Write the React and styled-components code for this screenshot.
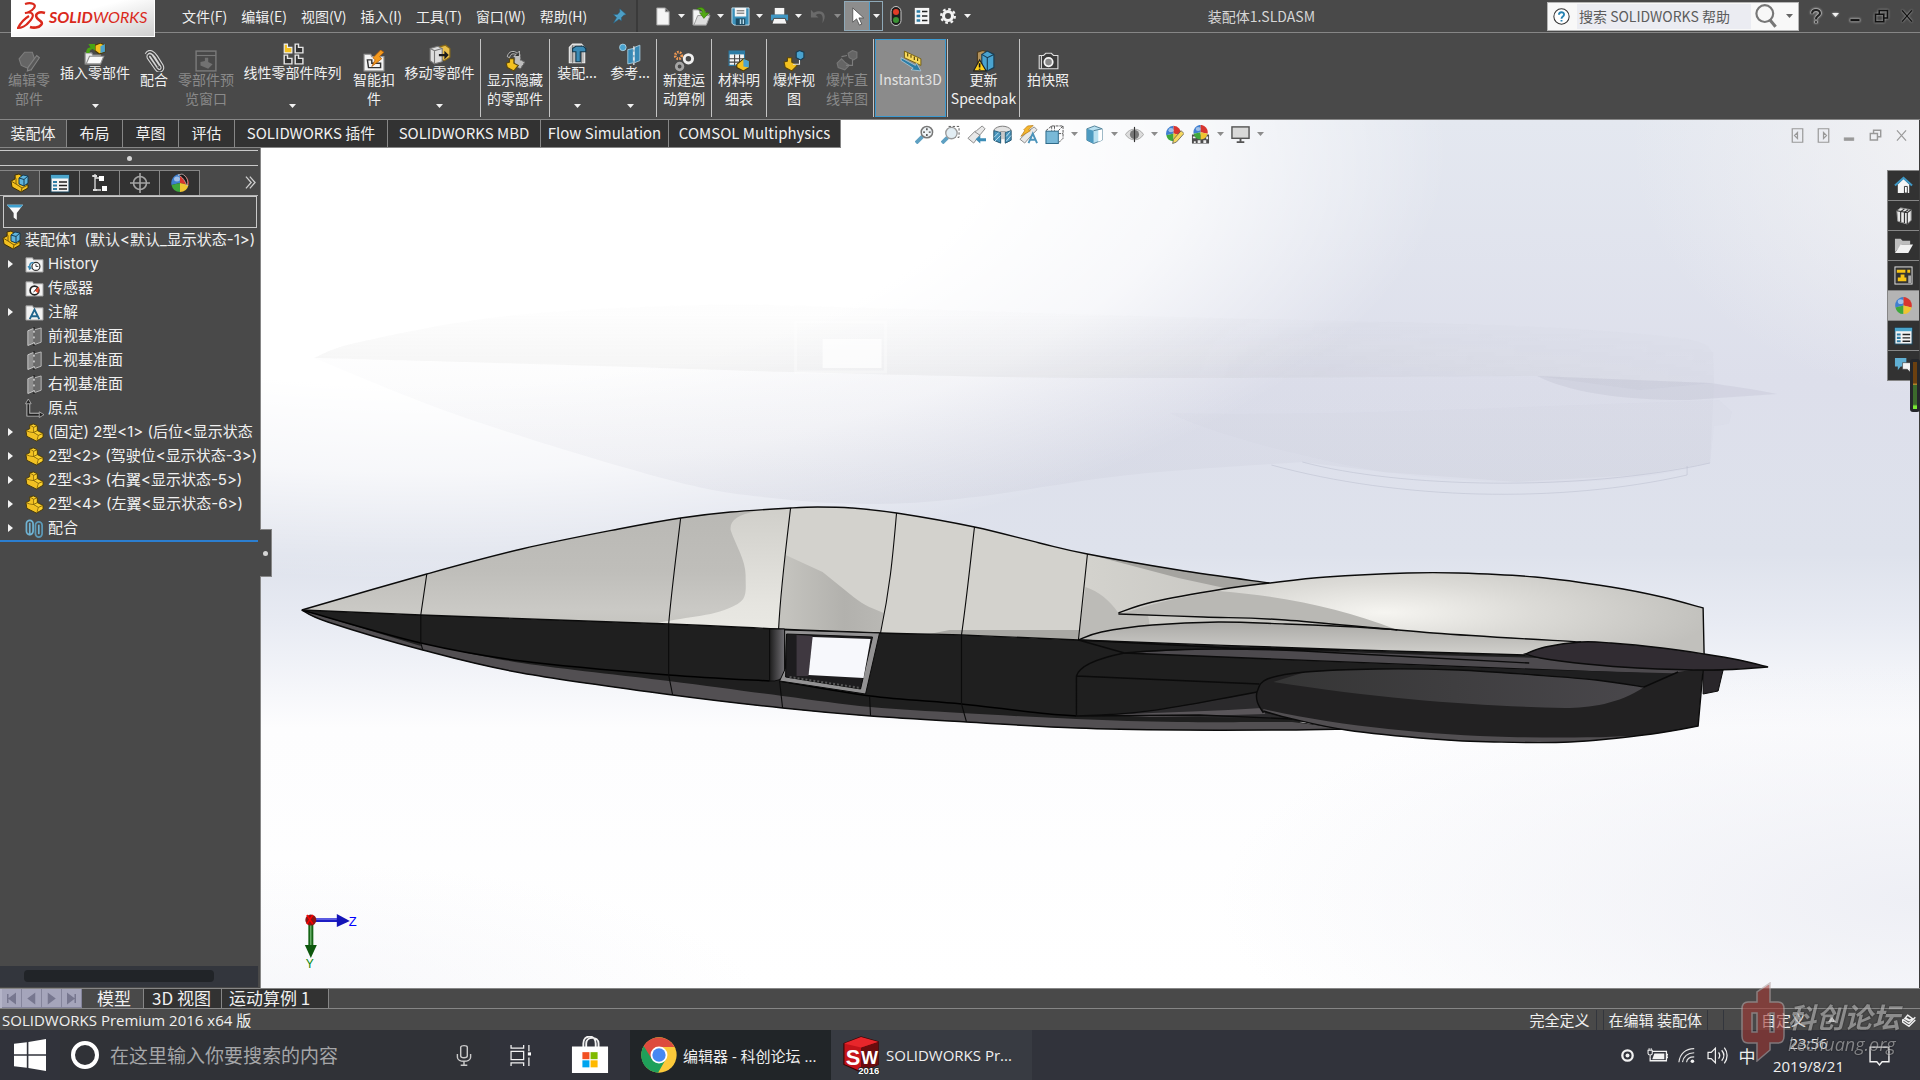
import React from 'react'
import styled, { createGlobalStyle } from 'styled-components'

const ui = '"Noto Sans CJK SC", sans-serif'
const wide = 'Inter, "Noto Sans CJK SC", sans-serif'
const line = '#868686'

/* ---------- icons, all drawn on a 20 x 20 grid ---------- */

const part = (
  <>
    <path d="M1 8 L5 6 L5 2 L9 1 L13 3 L13 8 L19 11 L19 15 L12 19 L2 14 Z" fill="#fbd02c" stroke="#4a3a08" strokeWidth="1" />
    <path d="M5 2 L9 4.500 L13 3 M9 4.500 V10 L13 8 M9 10 L14 13 L19 11 M14 13 L12.500 18.500 M1 8 L5 9.500 L9 10" fill="none" stroke="#7a5c06" strokeWidth=".9" />
    <path d="M5.500 3 L9 5 V9.500 L5.500 8.500 Z M2 9 L9 11 L13.500 14 L12 18 L2.500 13.500 Z" fill="#e5a917" opacity=".4" />
  </>
)

const assembly = (
  <>
    <path d="M1 8 L5 6 L5 2 L9 1 L12 3 L12 10 L18 12 L18 15 L11 19 L2 14 Z" fill="#f4c11f" stroke="#3d3008" />
    <path d="M1 8 L6 11 L12 15 L18 12 M12 15 L11 19 M6 11 V6 L5 3" fill="none" stroke="#7a5c06" />
    <path d="M9 5 L13 2 L18 3 V10 L14 13 L9 11 Z" fill="#5fb4dd" stroke="#173c52" />
    <path d="M9 5 L14 6.500 L18 3 M14 6.500 V13" fill="none" stroke="#173c52" />
  </>
)

const ball = (
  <>
    <path d="M10 10 L10 1 A9 9 0 0 0 1.500 12 Z" fill="#3f7fd0" />
    <path d="M10 10 L10 1 A9 9 0 0 1 18.500 12 Z" fill="#d8352f" />
    <path d="M10 10 L1.500 12 A9 9 0 0 0 10 19 Z" fill="#3fa83c" />
    <path d="M10 10 L18.500 12 A9 9 0 0 1 10 19 Z" fill="#f0c431" />
    <ellipse cx="7" cy="6" rx="3" ry="2.500" fill="#fff" opacity=".5" />
  </>
)

const plane = (
  <>
    <path d="M3 4 L9 1.500 V17 L3 19.500 Z" fill="#8c8c8c" stroke="#c9c9c9" />
    <path d="M10 3 L17 1 V16 L10 18.500 Z" fill="#6c6c6c" stroke="#bdbdbd" />
    <path d="M9.500 0 V20" stroke="#111" strokeDasharray="4 2" />
  </>
)

const folder = <path d="M1 3 H8 L9 5 H19 V18 H1 Z" fill="#f1f1f1" stroke="#9a9a9a" />

const listSheet = (
  <>
    <rect x="1" y="2" width="18" height="17" fill="#f4f4f4" stroke="#14455f" />
    <rect x="1" y="2" width="18" height="3.500" fill="#4aa5cc" />
    <path d="M9 9 H17 M9 12.500 H17 M9 16 H17" stroke="#222" strokeWidth="1.500" />
    <path d="M3 9 H7 M3 12.500 H7 M3 16 H7" stroke="#2c7ca5" strokeWidth="2.200" />
  </>
)

const icons = {
  part,
  assembly,
  plane,
  list: listSheet,
  ball,
  appearance: (
    <>
      {ball}
      <path d="M8 2 C13 4 15 8 17 13 C19 9 17 3 12 1 Z" fill="#161616" stroke="#ddd" strokeWidth=".6" />
    </>
  ),
  pin: <path d="M11 1 L19 8 L16 9 L13 12 L13 16 L10 14 L3 19 L7 12 L3 8 L8 8 L11 5 Z" fill="#4d9fc6" stroke="#27607d" strokeWidth=".7" />,
  newDoc: <path d="M4 1 H13 L17 5 V19 H4 Z M13 1 V5 H17" fill="#f5f5f5" stroke="#9c9c9c" />,
  open: (
    <>
      <path d="M1 3 H7 L8 5 H14 V9 L18 7 L15 19 H1 Z" fill="#f5f5f5" stroke="#999" />
      <path d="M2 19 L6 9 H19 L15 19 Z" fill="#dedede" stroke="#999" />
      <path d="M5 2 C9 -1 14 1 14 6 H18 L12.500 12 L8 6 H11 C11 3 8 2 5 2 Z" fill="#52a914" stroke="#2f6a08" strokeWidth=".6" />
    </>
  ),
  save: (
    <>
      <path d="M1 1 H19 V19 H3 L1 17 Z" fill="#3b90ba" stroke="#c7dfeb" />
      <rect x="4" y="1" width="12" height="9" fill="#f6f6f6" />
      <path d="M6 4 H14 M6 6.500 H14" stroke="#555" />
      <path d="M5 12 H15 V19 H5 Z" fill="#1d4a61" />
      <path d="M10 13 V18 M13 13 V18" stroke="#b9dcec" strokeWidth="1.500" />
    </>
  ),
  print: (
    <>
      <path d="M5 1 H15 V8 H5 Z" fill="#f5f5f5" />
      <path d="M1 8 H19 V14 H1 Z" fill="#3f97c4" />
      <path d="M4 12 H16 L18 18 H2 Z" fill="#f5f5f5" stroke="#444" />
    </>
  ),
  undo: <path d="M2 3 V11 H10 L7 8.500 C12 5 16 8 14 17 C20 9 15 1 5 6 Z" fill="#6a6a6a" />,
  cursor: <path d="M5 1 V16 L9 12.500 L12 19 L14.500 18 L11.500 11.500 H16.500 Z" fill="#fff" stroke="#444" strokeWidth=".8" />,
  traffic: (
    <>
      <rect x="5" y="0.500" width="10" height="19" rx="5" fill="#1d1d1d" stroke="#c9c9c9" />
      <circle cx="10" cy="6" r="3" fill="#e33b26" />
      <circle cx="10" cy="14" r="3" fill="#3a9134" />
    </>
  ),
  props: (
    <>
      <rect x="2" y="1" width="16" height="18" fill="#f5f5f5" />
      <path d="M10 5 H16 M10 10 H16 M10 15 H16" stroke="#222" strokeWidth="1.500" />
      <path d="M4 5 H8 M4 10 H8 M4 15 H8" stroke="#2c7ca5" strokeWidth="3" />
    </>
  ),
  gear: (
    <>
      <circle cx="10" cy="10" r="5" fill="none" stroke="#f3f3f3" strokeWidth="3.400" />
      <circle cx="10" cy="10" r="7.600" fill="none" stroke="#f3f3f3" strokeWidth="2.500" strokeDasharray="3 2.970" />
    </>
  ),
  editPart: (
    <g opacity=".35">
      <path d="M1 8 L6 2 L13 2 L15 8 L12 18 L3 14 Z" fill="#9a9a9a" stroke="#ddd" />
      <path d="M9 16 L17 5 L19.500 7 L12 18 L8.500 19 Z" fill="#777" stroke="#eee" />
    </g>
  ),
  insert: (
    <>
      <path d="M10 2 L15 0 L19 2 V8 L14 10 L10 7 Z" fill="#f4c11f" stroke="#4a3a08" />
      <path d="M15 3 L19 1 V8 L15 9 Z" fill="#4aa3cf" />
      <path d="M1 9 H7 L8 11 H15 V19 H1 Z" fill="#e9e9e9" stroke="#8d8d8d" />
      <path d="M2 19 L5 12 H18 L15 19 Z" fill="#fafafa" stroke="#8d8d8d" />
      <path d="M2 9 C2 5 4 4 6 4 L4 1 H10 V7 L8 5.500 C6 6 5 7 5 9 Z" fill="#49a313" />
    </>
  ),
  clip: (
    <>
      <path d="M3 4 C6 -1 10 3 12 6 L17 14 C19 18 15 21 12 17 L5 7 C4 4 7 4 8 6 L14 15" fill="none" stroke="#d5d5d5" strokeWidth="3.400" />
      <path d="M3 4 C6 -1 10 3 12 6 L17 14 C19 18 15 21 12 17 L5 7 C4 4 7 4 8 6 L14 15" fill="none" stroke="#444" strokeWidth="1.400" />
    </>
  ),
  preview: (
    <g opacity=".5">
      <rect x="1" y="1" width="18" height="18" fill="none" stroke="#aaa" strokeWidth="1.300" />
      <path d="M1 5 H19" stroke="#aaa" />
      <path d="M5 11 L9 10 V7 L12 7 V11 L16 13 L12 17 L5 14 Z" fill="#999" />
    </g>
  ),
  pattern: (
    <>
      <path d="M2 1 H5 V4 H9 V9 H2 Z" fill="#f4c11f" stroke="#eee" />
      <path d="M12 1 H15 V4 H19 V9 H12 Z M2 11 H5 V14 H9 V19 H2 Z M12 11 H15 V14 H19 V19 H12 Z" fill="#333" stroke="#e5e5e5" strokeWidth="1.300" />
    </>
  ),
  smart: (
    <>
      <path d="M1 4 H7 L8 6 H19 V19 H1 Z" fill="#f4f4f4" stroke="#999" />
      <path d="M4 9 H8 V12 H16 V16 H5 Z" fill="none" stroke="#333" strokeWidth="1.300" />
      <path d="M16 0 L19 2 L15 6 L17 8 L8 15 L11 9 L9 7 Z" fill="#f39a1e" stroke="#b45b07" strokeWidth=".7" />
    </>
  ),
  move: (
    <>
      <path d="M8 4 L15 2 L19 5 V13 L14 16 L8 14 Z" fill="#eac04b" stroke="#8a6a17" />
      <path d="M1 5 L8 3 L12 5 V17 L5 19 L1 16 Z" fill="#dedede" stroke="#777" />
      <path d="M1 5 L5 7 L12 5 M5 7 V19" fill="none" stroke="#777" />
      <path d="M9 10 H14 V7 L18 11 L14 15 V12 H9 Z" fill="#1c1c1c" />
    </>
  ),
  hideShow: (
    <>
      <path d="M10 5 L15 4 L15 9 L19 11 L15 17 L9 14 Z" fill="#bdbdbd" stroke="#666" strokeDasharray="2 1" />
      <path d="M2 12 L5 11 V8 L9 8 V12 L13 14 L9 19 L3 16 Z" fill="#f4c11f" stroke="#5b470a" />
      <path d="M3 6 C4 1 9 0 12 3 L14 1 V6 H9 L11 4 C8 3 6 3 5 7 Z" fill="#333" stroke="#ddd" strokeWidth=".7" />
    </>
  ),
  feature: (
    <>
      <path d="M3 4 L6 1 H14 L17 4 V18 H3 Z" fill="#bcbcbc" stroke="#eee" />
      <path d="M6 2 V18 M14 2 V18" stroke="#777" />
      <path d="M6 5 L9 3 H16 L18 5 V8 H13 V17 L9 17 V8 L6 8 Z" fill="#3a8ab5" stroke="#12384d" />
    </>
  ),
  reference: (
    <>
      <circle cx="3.500" cy="4" r="3" fill="#4aa3cf" stroke="#b8d9ea" strokeWidth=".7" />
      <path d="M8 6 L13 5 V18 L8 19 Z M14 4 L19 2 V16 L14 18 Z" fill="#3789b5" stroke="#a8cfe2" strokeWidth=".8" />
      <path d="M13.500 3 V20" stroke="#fff" strokeDasharray="3 2" />
    </>
  ),
  motion: (
    <>
      <circle cx="5" cy="5" r="3" fill="none" stroke="#ef9a54" strokeWidth="2.500" strokeDasharray="1.500 1" />
      <circle cx="14" cy="8" r="3.800" fill="none" stroke="#f0f0f0" strokeWidth="2.600" />
      <circle cx="6" cy="15" r="3" fill="none" stroke="#a5a5a5" strokeWidth="2.500" />
    </>
  ),
  bom: (
    <>
      <path d="M1 1 H15 V14 H1 Z" fill="#f5f5f5" stroke="#2c7ca5" />
      <path d="M1 1 H15 V4 H1 Z" fill="#2c7ca5" />
      <path d="M1 8 H15 M1 11 H15 M6 4 V14 M10.500 4 V14" stroke="#444" />
      <path d="M8 13 L14 8 L19 10 V16 L14 19 L8 16 Z" fill="#f4c11f" stroke="#4a3a08" />
      <path d="M14 8 L19 10 V16 L14 15 Z" fill="#4aa3cf" />
    </>
  ),
  explode: (
    <>
      <path d="M1 11 L4 10 V7 L8 7 V11 L13 14 L8 19 L2 16 Z" fill="#f4c11f" stroke="#5b470a" />
      <path d="M12 2 L15 0.500 L19 2 V7 L16 9 L12 7 Z" fill="#4aa3cf" stroke="#173c52" />
      <path d="M9 13 H15 V9" fill="none" stroke="#e8e8e8" />
    </>
  ),
  explodeOff: (
    <g opacity=".35">
      <path d="M1 12 L5 8 L8 11 L12 14 L8 18 L2 16 Z M11 3 L15 0.500 L19 2 V7 L16 9 L12 7 Z" fill="#999" stroke="#ccc" />
      <path d="M5 6 L10 5 M9 14 H15 V9" fill="none" stroke="#ddd" />
    </g>
  ),
  instant: (
    <>
      <path d="M4 1 L19 8 V14 L4 7 Z" fill="#f8d95c" stroke="#6c560c" strokeWidth=".8" />
      <path d="M7 3 V6 M10 4.500 V7 M13 6 V9 M16 7.500 V10" stroke="#513f04" />
      <path d="M1 7 L14 14 L15 12 L19 19 L10 18 L12 16.500 L1 9.500 Z" fill="#2c7ca5" stroke="#bcd9e8" strokeWidth=".6" />
    </>
  ),
  speedpak: (
    <>
      <path d="M4 2 L9 0.500 L14 2 V18 L4 18 Z" fill="#b3925b" stroke="#4d3b1c" />
      <path d="M8 4 L13 1 L19 4 V16 L13 19 L8 16 Z" fill="#4aa3cf" stroke="#173c52" />
      <path d="M8 4 L13 7 L19 4 M13 7 V19" stroke="#173c52" fill="none" />
      <path d="M6 9 L12 19 H0.500 Z" fill="#ffd21a" stroke="#222" />
      <path d="M6 12 V16 M6 17 V18" stroke="#111" strokeWidth="1.500" />
    </>
  ),
  camera: (
    <>
      <path d="M2 5 H6 L8 3 H13 L15 5 H19 V17 H2 Z" fill="#3a3a3a" stroke="#ddd" />
      <circle cx="10.500" cy="11" r="3.800" fill="#888" stroke="#f4f4f4" strokeWidth="1.600" />
      <path d="M4 5 V17" stroke="#ddd" />
    </>
  ),
  zoomFit: (
    <>
      <path d="M1 19 L8 12" stroke="#5ea0c2" strokeWidth="4" />
      <circle cx="12.500" cy="7.500" r="6" fill="#eef3f6" stroke="#777" strokeWidth="1.600" />
      <path d="M12.500 3.500 V5.500 M12.500 9.500 V11.500 M8.500 7.500 H10.500 M14.500 7.500 H16.500" stroke="#444" strokeWidth="1.500" />
    </>
  ),
  zoomArea: (
    <>
      <path d="M8 1.500 H19 V13 H14" fill="none" stroke="#555" strokeDasharray="2.500 1.800" />
      <path d="M1 19 L7 13" stroke="#5ea0c2" strokeWidth="4" />
      <circle cx="11" cy="8.500" r="6" fill="#e2edf3" stroke="#999" strokeWidth="1.400" />
    </>
  ),
  previous: (
    <>
      <path d="M1 14 L8 7 L10 6 L16 1 L19 4 L14 10 L7 19 Z" fill="#e8e8e8" stroke="#888" />
      <path d="M8 7 L14 11" stroke="#888" />
      <path d="M9 15 L14 11 V14 H20 V17 H14 V19.500 Z" fill="#3c8db7" />
    </>
  ),
  section: (
    <>
      <path d="M1 5 C5 0 15 0 19 5 V16 L13 19 V7 H8 V19 L1 16 Z" fill="#e2e2e2" stroke="#777" />
      <path d="M8 7 H13 V15 H8 Z" fill="#c9c9c9" />
      <path d="M1 6 L8 8 V19 L1 16 Z M19 6 L13 8 V19 L19 16 Z" fill="#4a96bd" stroke="#28607e" />
      <path d="M1 13 L6 8 M2 17 L8 11 M14 12 L18 7 M14 17 L19 11" stroke="#bfe0f0" />
    </>
  ),
  dynamic: (
    <>
      <path d="M1 15 L9 7 L16 2 L19 5 L13 11 L6 19 Z" fill="#e8e8e8" stroke="#888" />
      <path d="M9 1 L15 0.500 L10 5 L12 6 L2 12 L6 6 L5 5 Z" fill="#f5b62e" stroke="#b37714" strokeWidth=".7" />
      <path d="M10 19 L14.500 9 L19 19 M12 15.500 H17" fill="none" stroke="#4a93ba" strokeWidth="2" />
    </>
  ),
  orient: (
    <>
      <path d="M1 6 L7 1 H19 V14 L14 19 M14 6 L19 1 M7 1 V6 M10 1 V6 M14 9 H19" fill="none" stroke="#555" strokeDasharray="3 1" />
      <rect x="1" y="6.500" width="13" height="13" fill="#79b9d8" stroke="#2a6686" />
    </>
  ),
  display: (
    <>
      <path d="M2 4 L10 1 L18 4 V16 L9 19.500 L2 16 Z" fill="#b8e0f0" stroke="#4d7e96" />
      <path d="M2 4 L9 6 V19.500 L2 16 Z" fill="#4d9ac0" />
      <path d="M14 5 L18 4 V16 L14 17.500 Z" fill="#fff" />
      <path d="M9 6 L18 4" stroke="#4d7e96" />
    </>
  ),
  eye: (
    <>
      <path d="M0.500 10 C5 2.500 15 2.500 19.500 10 C15 17.500 5 17.500 0.500 10 Z" fill="#dcdcdc" stroke="#a8a8a8" />
      <circle cx="10" cy="10" r="4.800" fill="#777" />
      <path d="M10 2 V18" stroke="#333" strokeWidth="1.200" />
    </>
  ),
  ballEdit: (
    <>
      <g transform="scale(.9)">{ball}</g>
      <path d="M17 6 L20 9 L12 18 L8 19.500 L9 15 Z" fill="#f6d860" stroke="#555" strokeWidth=".8" />
    </>
  ),
  scene: (
    <>
      <path d="M1 10 H19 V19.500 H1 Z" fill="#4d4d4d" />
      <path d="M2 12 H5 V14 H2 Z M7 16 H10 V19 H7 Z M13 16 H16 V19 H13 Z M16 12 H18 V15 H16 Z M3 17 H5 V19 H3 Z" fill="#eee" />
      <g transform="translate(1.500 -1) scale(.86)">{ball}</g>
    </>
  ),
  monitor: (
    <>
      <rect x="1" y="2" width="18" height="12" fill="#d9d9d9" stroke="#555" strokeWidth="1.500" />
      <path d="M10 14 V18 M6 18 H14" stroke="#555" strokeWidth="2" />
    </>
  ),
  structure: (
    <>
      <path d="M2 3 H5 M5 1 V17 H11 M5 5 H10" fill="none" stroke="#e0e0e0" strokeWidth="1.300" />
      <path d="M9 3 H14 V8 H9 Z M12 13 H17 V18 H12 Z" fill="#fff" />
      <path d="M3 3 H7 M3 17 H7" stroke="#ddd" strokeWidth="2" />
    </>
  ),
  target: (
    <>
      <circle cx="10" cy="10" r="6.500" fill="none" stroke="#a5a5a5" strokeWidth="1.600" />
      <path d="M10 0 V20 M0 10 H20" stroke="#a5a5a5" strokeWidth="1.600" />
    </>
  ),
  funnel: (
    <>
      <path d="M1 2 H19 L12 11 V19 L8.500 16 V11 Z" fill="#fafafa" />
      <path d="M1 2 H19 L16.500 5 H3.500 Z" fill="#3fa0cf" />
    </>
  ),
  history: (
    <>
      {folder}
      <circle cx="11.500" cy="12" r="4.200" fill="#fff" stroke="#333" strokeWidth="1.300" />
      <path d="M11.500 9.500 V12 H14" fill="none" stroke="#333" />
      <path d="M9 8 C5 8 4 11 6 14 L4 15 M6 14 L3 12" fill="none" stroke="#3789b5" strokeWidth="1.600" />
    </>
  ),
  sensor: (
    <>
      {folder}
      <circle cx="10" cy="12" r="4.600" fill="#fff" stroke="#222" strokeWidth="1.800" />
      <path d="M10 12 L15 8 L14 15 Z" fill="#e8482b" />
      <path d="M9 14 L13 9" stroke="#333" />
    </>
  ),
  note: (
    <>
      {folder}
      <path d="M5 17 L10 7 L15 17 M7 14 H13" fill="none" stroke="#1f648c" strokeWidth="2" />
    </>
  ),
  origin: (
    <>
      <path d="M3.500 3 V16.500 H17" fill="none" stroke="#bdbdbd" strokeWidth="4" />
      <path d="M3.500 2 V16.500 H18" fill="none" stroke="#222" strokeWidth="2" />
      <path d="M0.500 5 L3.500 0 L6.500 5 Z M15 13.500 L20 16.500 L15 19.500 Z" fill="#222" stroke="#bbb" strokeWidth=".8" />
    </>
  ),
  mates: (
    <>
      <rect x="1.500" y="1.500" width="7" height="15" rx="3.500" fill="none" stroke="#6fb3d3" strokeWidth="1.800" />
      <path d="M5 4 V17" stroke="#6fb3d3" strokeWidth="1.800" />
      <rect x="11" y="3" width="7" height="16" rx="3.500" fill="none" stroke="#5c9ab8" strokeWidth="1.800" />
      <path d="M14.500 6 V16" stroke="#6fb3d3" strokeWidth="1.800" />
    </>
  ),
  home: (
    <>
      <path d="M4 9 V18 H16 V9 L10 3 Z" fill="#f5f5f5" />
      <path d="M1 10 L10 2 L19 10" fill="none" stroke="#3f97c4" strokeWidth="2.200" />
      <path d="M11 11 H14 V18 H11 Z" fill="#fff" stroke="#333" />
    </>
  ),
  books: (
    <>
      <path d="M3 5 L7 2 L18 4 V15 L14 19 L4 16 Z" fill="#e8e8e8" stroke="#999" />
      <path d="M3 5 L14 7 L18 4 M7 6 V17 M11 6.500 V18 M14 7 V19 M7 6 L11 3 M11 6.500 L15 4" fill="none" stroke="#333" strokeWidth="1.200" />
    </>
  ),
  folderOpen: (
    <>
      <path d="M1 3 H7 L9 5 H17 V9 H8 L1 17 Z" fill="#bdbdbd" />
      <path d="M7 9 H20 L15 18 H1 Z" fill="#f1f1f1" />
    </>
  ),
  palette: (
    <>
      <rect x="1" y="1" width="18" height="18" fill="#333" stroke="#e8e8e8" />
      <path d="M3 4 H12 V7 H3 Z M14 4 H17 V7 H14 Z M7 9 H11 V12 H13 V16 H4 V12 H7 Z" fill="#f6c415" />
      <rect x="15" y="10" width="3" height="8" fill="#aaa" />
    </>
  ),
  chat: (
    <>
      <path d="M1 2 H13 V11 H7 L4 15 V11 H1 Z" fill="#60afd3" />
      <path d="M9 7 H19 V14 H17 V17 L14 14 H9 Z" fill="#f3f3f3" stroke="#444" strokeWidth=".7" />
    </>
  ),
  paneLeft: <path d="M3 1 H17 V19 H3 Z M10 6 V14 L6 10 Z" fill="none" stroke="#999" strokeWidth="1.600" />,
  paneRight: <path d="M3 1 H17 V19 H3 Z M10 6 V14 L14 10 Z" fill="none" stroke="#999" strokeWidth="1.600" />,
  minimize: <rect x="3" y="14" width="14" height="4" fill="currentColor" stroke="#999" strokeWidth=".8" />,
  restore: <path d="M7 7 V2 H18 V12 H13 M2 7 H13 V17 H2 Z" fill="none" stroke="currentColor" strokeWidth="2.200" />,
  close: <path d="M3 2 L17 18 M17 2 L3 18" fill="none" stroke="currentColor" strokeWidth="1.800" />,
  magnifier: (
    <>
      <circle cx="9" cy="8" r="7" fill="none" stroke="#777" strokeWidth="1.800" />
      <path d="M13 13 L18 19" stroke="#777" strokeWidth="2.600" />
    </>
  ),
  help: (
    <>
      <circle cx="10" cy="10" r="9" fill="#fff" stroke="#333" strokeWidth="1.200" />
      <path d="M7 8 C7 4 13 4 13 7.500 C13 10 10 10 10 12.500 M10 14 V16" fill="none" stroke="#2783b3" strokeWidth="2.200" />
    </>
  ),
  question: (
    <>
      <path d="M5 7 C5 1 15 1 15 6.500 C15 10 10 9 10 14 M10 16 V19" fill="none" stroke="#aaa" strokeWidth="4.400" />
      <path d="M5 7 C5 1 15 1 15 6.500 C15 10 10 9 10 14 M10 16.500 V18.500" fill="none" stroke="#222" strokeWidth="2.600" />
    </>
  ),
  chevrons: <path d="M3 1 L11 10 L3 19 M9 1 L17 10 L9 19" fill="none" stroke="#cfcfcf" strokeWidth="2" />,
  tag: <path d="M1 9 L10 15 L19 6 M1 9 V13 L10 19 L19 10 M5 7 L12 11 M8 3 L15 8 L10 11 L4 8 Z" fill="none" stroke="#f1f1f1" strokeWidth="2" />,
  windows: <path d="M0 3 L8 2 V9.500 H0 Z M9 1.800 L20 0 V9.500 H9 Z M0 10.500 H8 V18 L0 17 Z M9 10.500 H20 V20 L9 18.200 Z" fill="#fff" />,
  mic: <path d="M7 3 C7 1 13 1 13 3 V11 C13 13 7 13 7 11 Z M4 9 V12 C4 17 16 17 16 12 V9 M10 16 V19 M7 19.300 H13" fill="none" stroke="#c9c9c9" strokeWidth="1.300" />,
  taskView: (
    <>
      <path d="M1 0 V3 H13 V0 M1 6 H13 V14 H1 Z M1 20 V17 H13 V20 M18 0 V6 M18 12 V20" fill="none" stroke="#f2f2f2" strokeWidth="1.200" />
      <rect x="17" y="7" width="3" height="3" fill="#fff" />
    </>
  ),
  store: (
    <>
      <path d="M6.500 6 V4 C6.500 -1 13 -1 13 4 V6 M8 6 V4 C8 0 14.500 0 14.500 4 V6" fill="none" stroke="#f2f2f2" />
      <path d="M0.500 5.500 H19.500 V19.500 H0.500 Z" fill="#fff" />
      <path d="M6 8.500 H9.700 V12.200 H6 Z" fill="#f25022" />
      <path d="M10.300 8.500 H14 V12.200 H10.300 Z" fill="#7fba00" />
      <path d="M6 12.800 H9.700 V16.500 H6 Z" fill="#00a4ef" />
      <path d="M10.300 12.800 H14 V16.500 H10.300 Z" fill="#ffb900" />
    </>
  ),
  chrome: (
    <>
      <circle cx="10" cy="10" r="9.800" fill="#fbc93a" />
      <path d="M10 10 L1.500 5 A9.800 9.800 0 0 0 9.500 19.800 L14 12 Z" fill="#1fa05a" />
      <path d="M1.500 5 A9.800 9.800 0 0 1 18.600 5.600 H10 L6 12.200 Z" fill="#dd4b3e" />
      <circle cx="10" cy="10" r="4.700" fill="#fff" />
      <circle cx="10" cy="10" r="3.700" fill="#4688f1" />
    </>
  ),
  solidworks: (
    <>
      <path d="M1 4 L10 0.500 L19 3 V15 L10 19 L1 15 Z" fill="#c4141a" stroke="#3c0506" strokeWidth=".6" />
      <path d="M10 6 L19 3 V15 L10 19 Z" fill="#6b0c0e" />
      <path d="M1 4 L10 0.500 L19 3 L10 6 Z" fill="#e8262b" />
      <text x="2" y="15" fontSize="11.500" fontWeight="700" fill="#fff" fontFamily="Liberation Sans">S</text>
      <text x="10" y="14.500" fontSize="9.500" fontWeight="700" fill="#fff" fontFamily="Liberation Sans">W</text>
      <text x="8.500" y="20" fontSize="5" fontWeight="700" fill="#fff" stroke="#222" strokeWidth="1" paintOrder="stroke" fontFamily="Liberation Sans">2016</text>
    </>
  ),
  record: (
    <>
      <circle cx="10" cy="10" r="8" fill="none" stroke="#f2f2f2" strokeWidth="3.500" />
      <circle cx="10" cy="10" r="3" fill="#f2f2f2" />
    </>
  ),
  battery: (
    <>
      <path d="M5 6 H18.500 V15 H3 V12 M18.500 9 H20 V12 H18.500" fill="none" stroke="#f2f2f2" strokeWidth="1.200" />
      <path d="M7 8 H16.500 V13.500 H5 Z" fill="#f2f2f2" />
      <path d="M1 5 H5 V8 C5 10 1 10 1 8 Z M2 3 V5 M4 3 V5 M3 9 V12" stroke="#f2f2f2" fill="none" />
    </>
  ),
  wifi: (
    <>
      <path d="M1 18 C2 9 8 3 18 3 M5 18 C6 12 10 8 18 7.500 M9.500 18 C10 14 13 12 18 12" fill="none" stroke="#e4e4e4" strokeWidth="1.300" />
      <circle cx="16" cy="17" r="2" fill="#f2f2f2" />
    </>
  ),
  sound: <path d="M1 7 H4 L8 3 V17 L4 13 H1 Z M11 7 C12.500 9 12.500 11 11 13 M14 5 C16.500 8 16.500 12 14 15 M16.500 2.500 C20 7 20 13 16.500 17.500" fill="none" stroke="#f0f0f0" strokeWidth="1.200" />,
  notice: <path d="M1 2 H19 V16 H12.500 L10 19 L7.500 16 H1 Z" fill="none" stroke="#f4f4f4" strokeWidth="1.300" />,
}

function Icon({ name, size = 20 }) {
  return <svg width={size} height={size} viewBox="0 0 20 20" aria-hidden="true">{icons[name]}</svg>
}

function Caret({ color = '#f2f2f2' }) {
  return <svg width="7" height="4" viewBox="0 0 7 4" aria-hidden="true"><path d="M0 0 H7 L3.500 4 Z" fill={color} /></svg>
}

/* ---------- model drawing ---------- */

// smooth line through the points; join = 'L' continues a path, 'M' starts one
function curve(points, join = 'M') {
  let d = `${join}${points[0][0]} ${points[0][1]}`
  for (let i = 0; i < points.length - 1; i++) {
    const p0 = points[i - 1] || points[i]
    const p1 = points[i]
    const p2 = points[i + 1]
    const p3 = points[i + 2] || p2
    d += ` C${p1[0] + (p2[0] - p0[0]) / 6} ${p1[1] + (p2[1] - p0[1]) / 6} ${p2[0] - (p3[0] - p1[0]) / 6} ${p2[1] - (p3[1] - p1[1]) / 6} ${p2[0]} ${p2[1]}`
  }
  return d + ' '
}

const back = (points) => [...points].reverse()

const topLine = [[302, 610], [427, 574], [522, 549], [619, 529], [681, 518], [731, 512], [791, 508], [818, 507], [852, 508], [897, 513], [975, 527], [1040, 543], [1088, 554], [1179, 570], [1270, 583]]
const waterLine = [[302, 610], [421, 615], [669, 624], [778, 629], [881, 633], [962, 635], [1079, 640], [1357, 650], [1526, 655]]
const keel = [[302, 610], [328, 622], [423, 650], [522, 673], [673, 695], [783, 708], [871, 716], [967, 722], [1077, 728], [1179, 730], [1286, 730], [1347, 729]]
const sideLine = [[302, 610], [421, 643], [522, 661], [669, 675], [770, 681]]
const sideLine2 = [[780, 681], [871, 696], [962, 704], [1040, 713], [1077, 716]]
const stripTop = [[421, 643], [522, 663], [669, 681], [783, 696], [871, 707], [962, 713], [1077, 719], [1179, 722], [1293, 722]]
const podTop = [[1119, 613], [1153, 602], [1224, 589], [1270, 583], [1327, 577], [1408, 573], [1459, 573], [1536, 577], [1612, 587], [1663, 597], [1704, 608]]
const podLow = [[1119, 614], [1204, 617], [1286, 620], [1434, 633], [1582, 642]]
const wingTop = [[1079, 640], [1102, 632], [1153, 625], [1219, 622], [1286, 624], [1357, 627], [1398, 630]]
const fin = [[1526, 654], [1546, 647], [1582, 642], [1612, 643], [1663, 648], [1705, 654], [1740, 660], [1769, 667]]
const finLow = [[1769, 667], [1714, 670], [1638, 668], [1587, 664], [1541, 658], [1526, 654]]
const lowPodTop = [[1264, 713], [1258, 702], [1258, 691], [1268, 679], [1306, 672], [1378, 669], [1459, 670], [1536, 675], [1597, 680], [1645, 687]]
const lowPodKeel = [[1264, 711], [1293, 719], [1347, 730], [1434, 739], [1495, 742], [1571, 742], [1653, 734], [1699, 726]]

const mirrorDark = [[314, 358], [360, 342], [507, 316], [701, 305], [874, 308], [1180, 317], [1500, 325], [1680, 338], [1714, 352]]
const mirrorEdge = [[314, 358], [568, 365], [793, 372], [1099, 378], [1538, 376]]
const mirrorKeel = [[314, 358], [466, 418], [670, 480], [772, 498], [874, 504], [976, 497], [1129, 475], [1303, 462]]

function Scene() {
  return (
    <Backdrop viewBox="0 120 1920 868" preserveAspectRatio="none" role="img" aria-label="装配体模型">
      <defs>
        <linearGradient id="sky" x1="0" y1="120" x2="0" y2="988" gradientUnits="userSpaceOnUse">
          <stop offset="0" stopColor="#e4e8f0" />
          <stop offset=".3" stopColor="#dddfeb" />
          <stop offset=".5" stopColor="#dee2ec" />
          <stop offset=".58" stopColor="#e8ebf3" />
          <stop offset=".7" stopColor="#fdfdfe" />
          <stop offset="1" stopColor="#ffffff" />
        </linearGradient>
        <radialGradient id="haze">
          <stop offset=".55" stopColor="#fff" />
          <stop offset=".75" stopColor="#fff" stopOpacity=".75" />
          <stop offset="1" stopColor="#fff" stopOpacity="0" />
        </radialGradient>
        <radialGradient id="edge">
          <stop offset="0" stopColor="#f2f2f4" />
          <stop offset="1" stopColor="#f2f2f4" stopOpacity="0" />
        </radialGradient>
        <radialGradient id="floor">
          <stop offset="0" stopColor="#eeeff5" />
          <stop offset="1" stopColor="#eeeff5" stopOpacity="0" />
        </radialGradient>
        <linearGradient id="mirror" x1="0" y1="312" x2="0" y2="378" gradientUnits="userSpaceOnUse">
          <stop offset="0" stopColor="#777" stopOpacity="0.010" />
          <stop offset="1" stopColor="#777" stopOpacity=".08" />
        </linearGradient>
        <linearGradient id="mirrorFade" x1="1180" y1="0" x2="1715" y2="0" gradientUnits="userSpaceOnUse">
          <stop offset="0" stopColor="#fff" />
          <stop offset="1" stopColor="#555" />
        </linearGradient>
        <mask id="fade">
          <rect x="261" y="120" width="1660" height="868" fill="url(#mirrorFade)" />
        </mask>
        <linearGradient id="mirrorLow" x1="0" y1="360" x2="0" y2="505" gradientUnits="userSpaceOnUse">
          <stop offset="0" stopColor="#aab" stopOpacity=".02" />
          <stop offset="1" stopColor="#aab" stopOpacity=".12" />
        </linearGradient>
        <linearGradient id="hull" x1="0" y1="508" x2="0" y2="635" gradientUnits="userSpaceOnUse">
          <stop offset="0" stopColor="#b9b8b4" />
          <stop offset=".5" stopColor="#bfbeba" />
          <stop offset=".8" stopColor="#cac9c5" />
          <stop offset="1" stopColor="#c2c1bc" />
        </linearGradient>
        <linearGradient id="canopy" x1="0" y1="508" x2="0" y2="630" gradientUnits="userSpaceOnUse">
          <stop offset="0" stopColor="#d0cfca" />
          <stop offset=".8" stopColor="#e6e5e0" />
          <stop offset="1" stopColor="#e9e8e3" />
        </linearGradient>
        <linearGradient id="light" x1="790" y1="0" x2="1290" y2="0" gradientUnits="userSpaceOnUse">
          <stop offset="0" stopColor="#d3d2cd" />
          <stop offset=".6" stopColor="#d3d2cd" />
          <stop offset="1" stopColor="#c4c3bf" />
        </linearGradient>
        <linearGradient id="wedge" x1="786" y1="0" x2="884" y2="0" gradientUnits="userSpaceOnUse">
          <stop offset="0" stopColor="#c4c3be" />
          <stop offset=".6" stopColor="#b2b1ad" />
          <stop offset="1" stopColor="#b9b8b4" />
        </linearGradient>
        <radialGradient id="pod" cx="1385" cy="612" r="330" gradientUnits="userSpaceOnUse" gradientTransform="translate(0 490) scale(1 .2)">
          <stop offset="0" stopColor="#f6f5f1" />
          <stop offset=".45" stopColor="#dcdbd7" />
          <stop offset="1" stopColor="#c1c0bc" />
        </radialGradient>
        <linearGradient id="wing" x1="0" y1="622" x2="0" y2="655" gradientUnits="userSpaceOnUse">
          <stop offset="0" stopColor="#aaa9a6" />
          <stop offset="1" stopColor="#d2d1cd" />
        </linearGradient>
        <linearGradient id="pillar" x1="770" y1="0" x2="786" y2="0" gradientUnits="userSpaceOnUse">
          <stop offset="0" stopColor="#1d1d1d" />
          <stop offset="1" stopColor="#77757a" />
        </linearGradient>
        <linearGradient id="lowPod" x1="1270" y1="0" x2="1640" y2="0" gradientUnits="userSpaceOnUse">
          <stop offset="0" stopColor="#353535" />
          <stop offset="1" stopColor="#49474b" />
        </linearGradient>
      </defs>

      <rect x="0" y="120" width="1920" height="868" fill="url(#sky)" />
      <ellipse cx="1960" cy="140" rx="330" ry="260" fill="url(#edge)" />
      <ellipse cx="420" cy="150" rx="1030" ry="430" fill="url(#haze)" />
      <ellipse cx="1920" cy="900" rx="700" ry="240" fill="url(#floor)" />
      <ellipse cx="261" cy="1000" rx="500" ry="140" fill="url(#floor)" opacity=".5" />

      {/* floor reflection */}
      <g>
        <path d={curve(mirrorDark) + 'L1715 383 L1640 390 ' + curve(back(mirrorEdge), 'L') + 'Z'} fill="url(#mirror)" mask="url(#fade)" />
        <path d={curve(mirrorEdge) + 'L1715 383 L1711 463 L1640 475 L1517 482 L1384 472 L1303 462 ' + curve(back(mirrorKeel), 'L') + 'Z'} fill="url(#mirrorLow)" />
        <path d="M1538 376 C1570 392 1620 400 1690 400 L1778 394 C1750 388 1730 386 1711 383 Z" fill="#8a8ca8" opacity=".12" />
        <path d="M1170 413 C1240 415 1340 414 1500 408 L1720 400 L1733 412 L1730 424 L1715 426 L1711 463 C1640 484 1520 490 1384 472 C1290 455 1210 432 1170 413 Z" fill="#9395b0" opacity=".03" />
        <path d="M1272 465 C1400 500 1560 504 1688 475 V466 M1303 462 C1400 488 1580 492 1711 463" fill="none" stroke="#b9bccd" opacity=".5" />
        <path d="M796 322 H886 V372 H796 Z" fill="none" stroke="#fff" strokeWidth="3" opacity=".35" />
        <path d="M823 339 H882 V368 H823 Z" fill="#fff" opacity=".7" />
      </g>

      {/* lower hull */}
      <path d={curve(waterLine) + 'L1700 660 L1690 675 L1300 722 L1347 729 ' + curve(back(keel), 'L') + 'Z'} fill="#1f1f1f" />
      <path d={'M302 610 L421 646 ' + curve(stripTop, 'L') + 'L1347 729 ' + curve(back(keel), 'L') + 'Z'} fill="#524f52" />
      <path d="M1077 716 C1153 712 1190 706 1258 692 L1262 712 L1293 719 L1150 716 Z" fill="#2b2a2c" />
      <path d="M1110 715 C1170 712 1220 711 1262 708 L1266 714 L1200 716 L1150 717 Z" fill="#5a565a" />
      <path d="M1128 653 L1204 649 L1280 650 L1430 655 L1541 658 L1587 664 L1704 670 L1673 675 L1434 666 Z" fill="#4d4a4e" />
      <path d={curve(keel)} fill="none" stroke="#0b0b0b" strokeWidth="1.500" />
      <path d={curve(sideLine) + curve(sideLine2)} fill="none" stroke="#000" strokeWidth="1.500" />

      {/* upper hull */}
      <path d={curve(topLine) + 'L1400 632 L1526 655 ' + curve(back(waterLine), 'L') + 'Z'} fill="url(#light)" />
      <path d="M731 512 L791 508 L779 629 L640 623 Z" fill="url(#canopy)" />
      <path d={curve(topLine.slice(0, 6)) + 'L757 511 C738 515 730 520 731 530 C736 545 746 560 746 575 C746 590 748 598 738 604 C715 617 690 616 658 623 L302 610 Z'} fill="url(#hull)" />
      <path d="M786 555 L823 572 L854 597 C865 606 875 609 884 613 L881 632 L779 629 Z" fill="url(#wedge)" />
      <path d="M930 634 L950 630 L1080 630 L1079 640 Z" fill="#a9a8a4" />
      <path d="M1086 587 C1100 592 1110 600 1119 613 C1135 608 1150 605 1150 625 L1079 640 Z" fill="#bcbbb7" />
      <path d="M1088 554 L1179 570 L1270 583 L1230 589 L1179 578 Z" fill="#a5a4a0" />
      <path d={curve(podTop) + 'L1705 654 L1582 642 ' + curve(back(podLow), 'L') + 'Z'} fill="url(#pod)" />
      <path d="M1219 591 C1290 597 1340 608 1398 630 L1286 620 L1122 614 C1150 604 1180 597 1219 591 Z" fill="#b9b8b4" />
      <path d={curve(wingTop) + 'L1434 633 L1582 642 L1526 655 L1357 650 Z'} fill="url(#wing)" />

      <g fill="none" stroke="#0b0b0b" strokeWidth="1.400">
        <path d={curve(topLine)} />
        <path d={curve(waterLine)} />
        <path d={curve(podTop) + 'L1705 654'} />
        <path d={curve(podLow)} />
        <path d={curve(wingTop)} />
        <path d="M427 574 L421 615 V643 L423 650 M681 518 C676 560 672 590 669 624 V675 L673 695 M791 508 C786 550 781 590 779 629 M780 681 L783 708 M897 513 C893 560 890 590 881 633 M870 696 L871 716 M975 527 C970 570 967 600 962 635 V704 L967 722 M1088 554 L1079 640" strokeWidth="1.100" />
        <path d="M1079 640 L1125 653 L1673 675 M1125 653 C1095 659 1080 666 1077 676 V716 M1077 676 L1260 684 M1077 716 C1153 714 1180 706 1258 692 M1077 716 L1200 715 L1293 719 M1125 653 C1190 647 1260 648 1340 653 L1530 663 M1079 640 L1230 648 L1340 650" />
      </g>

      {/* cockpit window */}
      <path d="M770 629 H785 V675 Q780 682 770 681 Z" fill="url(#pillar)" stroke="#0b0b0b" />
      <path d="M785 630 L880 633 L866 694 L780 681 L786 668 Z" fill="#939293" stroke="#0b0b0b" />
      <path d="M787 634 L873 637 L861 689 L786 677 Z" fill="#1d1c1e" stroke="#0b0b0b" />
      <path d="M797 635 L813 636 L809 676 H797 Z" fill="#3f3840" />
      <path d="M813 637 L871 639 L864 678 L809 675 Z" fill="#f7f8fc" />
      <path d="M790 677 L861 688" stroke="#555" strokeWidth="2" strokeDasharray="2 2" />

      {/* rear pods and fin */}
      <path d="M1704 670 H1724 L1719 691 L1704 694 Z" fill="#29262a" stroke="#0b0b0b" />
      <path d="M1480 668 L1700 674 L1650 694 L1500 680 Z" fill="#1f1f20" />
      <path d={curve(lowPodTop) + 'L1679 672 L1704 668 L1699 726 ' + curve(back(lowPodKeel), 'L') + 'Z'} fill="#222122" />
      <path d={'M1274 682 ' + curve(lowPodTop.slice(4), 'L') + 'C1620 704 1590 708 1566 708 C1480 706 1390 700 1274 682 Z'} fill="url(#lowPod)" />
      <path d={'M1264 709 C1340 726 1430 735 1510 737 C1560 738 1620 738 1653 734 ' + curve(back(lowPodKeel.slice(0, 7)), 'L') + 'Z'} fill="#524f52" />
      <path d={curve(lowPodTop) + 'L1679 672 M1704 670 L1699 726 ' + curve(back(lowPodKeel), 'L')} fill="none" stroke="#0b0b0b" strokeWidth="1.400" />
      <path d={curve(fin) + curve(finLow, 'L') + 'Z'} fill="#312c32" stroke="#0b0b0b" strokeWidth="1.400" />

      {/* axis triad */}
      <path d="M314 920 H338" stroke="#1d1dc4" strokeWidth="4" />
      <path d="M316 919 H338" stroke="#9a9aff" />
      <path d="M337 914 L350 921 L337 927 Z" fill="#1414b8" />
      <path d="M311 924 V948" stroke="#166616" strokeWidth="5" />
      <path d="M311 924 V946" stroke="#8fd08f" />
      <path d="M305 945 L311 958 L317 945 Z" fill="#0d570d" />
      <circle cx="311" cy="920" r="5.500" fill="#8e1414" />
      <path d="M307 915 L313 924 M313 915 L307 924" stroke="#f00" strokeWidth="1.400" />
      <text x="349" y="926" fontSize="13" fill="#00f" fontFamily="Liberation Sans">Z</text>
      <text x="306" y="968" fontSize="12" fill="#0a870a" fontFamily="Liberation Sans">Y</text>
    </Backdrop>
  )
}

/* ---------- data ---------- */

const menus = ['文件(F)', '编辑(E)', '视图(V)', '插入(I)', '工具(T)', '窗口(W)', '帮助(H)']

const quick = [
  ['newDoc', '新建'], ['open', '打开'], ['save', '保存'], ['print', '打印'], ['undo', '撤销'], ['cursor', '选择'],
]

const commands = [
  { icon: 'editPart', text: '编辑零\n部件', width: 58, off: true },
  { icon: 'insert', text: '插入零部件', width: 74, drop: true },
  { icon: 'clip', text: '配合', width: 44 },
  { icon: 'preview', text: '零部件预\n览窗口', width: 60, off: true },
  { icon: 'pattern', text: '线性零部件阵列', width: 113, drop: true },
  { icon: 'smart', text: '智能扣\n件', width: 50 },
  { icon: 'move', text: '移动零部件', width: 82, drop: true, end: true },
  { icon: 'hideShow', text: '显示隐藏\n的零部件', width: 69, end: true },
  { icon: 'feature', text: '装配...', width: 54, drop: true },
  { icon: 'reference', text: '参考...', width: 53, drop: true, end: true },
  { icon: 'motion', text: '新建运\n动算例', width: 55, end: true },
  { icon: 'bom', text: '材料明\n细表', width: 55, end: true },
  { icon: 'explode', text: '爆炸视\n图', width: 54 },
  { icon: 'explodeOff', text: '爆炸直\n线草图', width: 53, off: true, end: true },
  { icon: 'instant', text: 'Instant3D', width: 74, active: true, end: true },
  { icon: 'speedpak', text: '更新\nSpeedpak', width: 72, end: true },
  { icon: 'camera', text: '拍快照', width: 56 },
]

const commandTabs = [
  ['装配体', 67], ['布局', 56], ['草图', 56], ['评估', 56], ['SOLIDWORKS 插件', 153],
  ['SOLIDWORKS MBD', 153], ['Flow Simulation', 128], ['COMSOL Multiphysics', 172],
]

const viewTools = [
  ['zoomFit', '整屏显示全图'], ['zoomArea', '局部放大'], ['previous', '上一视图'], ['section', '剖面视图'], ['dynamic', '动态注解'],
  ['orient', '视图定向', true], ['display', '显示样式', true], ['eye', '隐藏项目', true], ['ballEdit', '编辑外观'], ['scene', '应用布景', true], ['monitor', '视图设定', true],
]

const tree = [
  { icon: 'history', text: 'History', open: true },
  { icon: 'sensor', text: '传感器' },
  { icon: 'note', text: '注解', open: true },
  { icon: 'plane', text: '前视基准面' },
  { icon: 'plane', text: '上视基准面' },
  { icon: 'plane', text: '右视基准面' },
  { icon: 'origin', text: '原点' },
  { icon: 'part', text: '(固定) 2型<1> (后位<显示状态', open: true },
  { icon: 'part', text: '2型<2> (驾驶位<显示状态-3>)', open: true },
  { icon: 'part', text: '2型<3> (右翼<显示状态-5>)', open: true },
  { icon: 'part', text: '2型<4> (左翼<显示状态-6>)', open: true },
  { icon: 'mates', text: '配合', open: true },
]

const panelTabs = [['assembly', '设计树'], ['list', '属性'], ['structure', '配置'], ['target', '尺寸专家'], ['appearance', '外观']]
const paneTabs = [['home', '资源'], ['books', '设计库'], ['folderOpen', '文件探索器'], ['palette', '视图调色板'], ['ball', '外观布景'], ['list', '自定义属性'], ['chat', '论坛']]
const steps = ['M5 4 V16 M15 4 L7 10 L15 16 Z', 'M14 4 L6 10 L14 16 Z', 'M6 4 L14 10 L6 16 Z', 'M15 4 V16 M5 4 L13 10 L5 16 Z']

/* ---------- page ---------- */

function App() {
  const [tab, setTab] = React.useState('装配体')

  return (
    <Page>
      <GlobalStyle />
      <TitleBar>
        <Logo>
          <svg width="29" height="28" viewBox="0 0 29 28" aria-hidden="true">
            <path d="M8 2 C14 0 20 2 17 6 C15 9 10 11 8 11 C17 9 18 14 12 20 C9 24 4 26 1 26 C3 22 7 17 12 14" fill="none" stroke="#da291c" strokeWidth="2.200" />
            <path d="M28 11 C22 9 17 12 20 16 C22 19 27 20 24 23 C22 26 16 26 13 25" fill="none" stroke="#da291c" strokeWidth="2.600" />
          </svg>
          <span><b>SOLID</b>WORKS</span>
        </Logo>
        <MenuBar>
          {menus.map((m) => <MenuItem key={m}>{m}</MenuItem>)}
        </MenuBar>
        <PinButton aria-label="固定"><Icon name="pin" size={16} /></PinButton>
        <QuickBar>
          {quick.map(([icon, label]) => (
            <QuickPair key={icon} $active={icon === 'cursor'}>
              <QuickButton aria-label={label}><Icon name={icon} size={19} /></QuickButton>
              <DropButton aria-label={label + '选项'}><Caret color={icon === 'undo' ? '#8a8a8a' : undefined} /></DropButton>
            </QuickPair>
          ))}
          <QuickButton aria-label="重建模型"><Icon name="traffic" size={20} /></QuickButton>
          <QuickButton aria-label="文件属性"><Icon name="props" size={18} /></QuickButton>
          <QuickButton aria-label="选项"><Icon name="gear" size={18} /></QuickButton>
          <DropButton aria-label="更多选项"><Caret /></DropButton>
        </QuickBar>
        <DocTitle>装配体1.SLDASM</DocTitle>
        <HelpSearch>
          <Icon name="help" size={17} />
          <input aria-label="搜索帮助" placeholder="搜索 SOLIDWORKS 帮助" />
          <button aria-label="搜索"><Icon name="magnifier" size={24} /></button>
          <button aria-label="搜索范围"><Caret color="#666" /></button>
        </HelpSearch>
        <WindowButtons>
          <button aria-label="帮助"><Icon name="question" size={16} /></button>
          <DropButton aria-label="帮助选项"><Caret /></DropButton>
          <button aria-label="最小化"><Icon name="minimize" size={14} /></button>
          <button aria-label="还原"><Icon name="restore" size={15} /></button>
          <button aria-label="关闭"><Icon name="close" size={14} /></button>
        </WindowButtons>
      </TitleBar>

      <Ribbon>
        {commands.map((c) => (
          <Command key={c.text} $width={c.width} $end={c.end}>
            <CommandButton disabled={c.off} $drop={c.drop} $active={c.active}>
              <Icon name={c.icon} size={22} />
              <span>{c.text}</span>
              {c.drop && <Caret />}
            </CommandButton>
          </Command>
        ))}
      </Ribbon>

      <Main>
        <Scene />
        <TopRow>
          <Tabs>
            {commandTabs.map(([t, width]) => <Tab key={t} $width={width} $active={t === tab} onClick={() => setTab(t)}>{t}</Tab>)}
          </Tabs>
          <ViewBar>
            {viewTools.map(([icon, label, drop]) => (
              <React.Fragment key={icon}>
                <ViewButton aria-label={label}><Icon name={icon} size={19} /></ViewButton>
                {drop && <DropButton aria-label={label + '选项'}><Caret color="#8c8c8c" /></DropButton>}
              </React.Fragment>
            ))}
          </ViewBar>
          <DocButtons>
            <button aria-label="左侧窗格"><Icon name="paneLeft" size={15} /></button>
            <button aria-label="右侧窗格"><Icon name="paneRight" size={15} /></button>
            <button aria-label="最小化文档"><Icon name="minimize" size={14} /></button>
            <button aria-label="还原文档"><Icon name="restore" size={13} /></button>
            <button aria-label="关闭文档"><Icon name="close" size={13} /></button>
          </DocButtons>
        </TopRow>

        <Body>
          <Panel>
            <Grip><i /></Grip>
            <PanelTabs>
              {panelTabs.map(([icon, label], i) => (
                <PanelTab key={icon} aria-label={label} $active={i === 0}><Icon name={icon} size={20} /></PanelTab>
              ))}
              <MoreButton aria-label="更多"><Icon name="chevrons" size={13} /></MoreButton>
            </PanelTabs>
            <Filter>
              <Icon name="funnel" size={18} />
              <input aria-label="过滤设计树" />
            </Filter>
            <Tree>
              <TreeRoot><Icon name="assembly" size={20} /><span>{'装配体1  (默认<默认_显示状态-1>)'}</span></TreeRoot>
              {tree.map((t) => (
                <TreeItem key={t.text}>
                  <Expander>{t.open && <svg width="5" height="8" viewBox="0 0 5 8"><path d="M0 0 L5 4 L0 8 Z" fill="#f2f2f2" /></svg>}</Expander>
                  <Icon name={t.icon} size={19} />
                  <span>{t.text}</span>
                </TreeItem>
              ))}
            </Tree>
            <ScrollTrack><i /></ScrollTrack>
            <PanelHandle aria-label="收起面板"><i /></PanelHandle>
          </Panel>
          <TaskPane>
            {paneTabs.map(([icon, label], i) => (
              <PaneButton key={icon} aria-label={label} $active={i === 4}><Icon name={icon} size={19} /></PaneButton>
            ))}
            <Meter />
          </TaskPane>
        </Body>
      </Main>

      <ModelTabs>
        <Steps>
          {steps.map((d, i) => (
            <button key={d} aria-label={'标签滚动 ' + (i + 1)}><svg width="15" height="15" viewBox="0 0 20 20"><path d={d} fill="#77778f" stroke="#77778f" strokeWidth="2" /></svg></button>
          ))}
        </Steps>
        <ModelTab $active>模型</ModelTab>
        <ModelTab>3D 视图</ModelTab>
        <ModelTab $last>运动算例 1</ModelTab>
      </ModelTabs>

      <StatusBar>
        <Product>SOLIDWORKS Premium 2016 x64 版</Product>
        <StatusCell>完全定义</StatusCell>
        <StatusCell $wide>在编辑 装配体</StatusCell>
        <StatusMenu>自定义 <svg width="8" height="5" viewBox="0 0 8 5"><path d="M0 5 L4 0 L8 5 Z" fill="#ddd" /></svg></StatusMenu>
        <TagButton aria-label="标签"><Icon name="tag" size={14} /></TagButton>
      </StatusBar>

      <TaskBar>
        <StartButton aria-label="开始"><Icon name="windows" size={32} /></StartButton>
        <Cortana>
          <i />
          <input aria-label="搜索" placeholder="在这里输入你要搜索的内容" />
          <button aria-label="语音"><Icon name="mic" size={22} /></button>
        </Cortana>
        <TaskIcon aria-label="任务视图"><Icon name="taskView" size={21} /></TaskIcon>
        <TaskIcon aria-label="应用商店" $wide><Icon name="store" size={38} /></TaskIcon>
        <TaskApp $dark><Icon name="chrome" size={36} />编辑器 - 科创论坛 ...</TaskApp>
        <TaskApp><Icon name="solidworks" size={38} />SOLIDWORKS Pr...</TaskApp>
        <Tray>
          <button aria-label="录制"><Icon name="record" size={13} /></button>
          <button aria-label="电池"><Icon name="battery" size={21} /></button>
          <button aria-label="网络"><Icon name="wifi" size={18} /></button>
          <button aria-label="音量"><Icon name="sound" size={21} /></button>
          <button>中</button>
        </Tray>
        <Clock><time>23:56</time><time>2019/8/21</time></Clock>
        <NoticeButton aria-label="通知"><Icon name="notice" size={21} /></NoticeButton>
      </TaskBar>

      <Stamp>
        <svg width="46" height="80" viewBox="0 0 46 80" aria-hidden="true">
          <path d="M17 20 V10 L30 1 V20 H38 Q44 20 44 27 V54 Q44 61 38 61 H30 V68 L17 79 V61 H8 Q2 61 2 54 V27 Q2 20 8 20 Z M12 31 V50 H17 V31 Z M30 31 V50 H34 V31 Z" fill="#a33a35" fillRule="evenodd" stroke="#b5a5a5" strokeWidth="1.500" />
        </svg>
        <StampText><b>科创论坛</b><i>kechuang.org</i></StampText>
      </Stamp>
    </Page>
  )
}

export default App

const GlobalStyle = createGlobalStyle`
  * { box-sizing: border-box; }
  body { margin: 0; background: #494949; font-family: ${ui}; }
  button, input { font: inherit; color: inherit; border: 0; padding: 0; margin: 0; background: none; }
  button { display: flex; align-items: center; justify-content: center; cursor: pointer; white-space: nowrap; }
  input { outline: none; min-width: 0; }
  svg { flex: none; display: block; }
`

const Page = styled.div`
  position: relative;
  display: flex;
  flex-direction: column;
  min-height: 100vh;
  overflow: hidden;
  background: #494949;
  color: #f0f0f0;
  font-size: 15px;
`

const TitleBar = styled.header`
  display: flex;
  align-items: center;
  height: 33px;
  border-bottom: 1px solid ${line};
`

const Logo = styled.div`
  position: relative;
  z-index: 2;
  align-self: flex-start;
  display: flex;
  align-items: center;
  gap: 3px;
  width: 144px;
  height: 37px;
  margin: 0 20px -4px 11px;
  padding: 0 0 4px 5px;
  border: 1px solid #fff;
  border-top: 0;
  background: linear-gradient(165deg, #fff 40%, #cfcfcf);
  color: #da291c;
  font: italic 16px Lato, sans-serif;
`

const MenuBar = styled.nav`
  display: flex;
`

const MenuItem = styled.button`
  height: 32px;
  padding: 0 7px;
  font-size: 14px;
`

const PinButton = styled.button`
  width: 38px;
  height: 32px;
  padding-left: 4px;
  margin-left: 4px;
`

const QuickBar = styled.div`
  display: flex;
  align-items: center;
  height: 32px;
  padding-left: 11px;
  border-left: 2px solid #3a3a3a;
`

const QuickPair = styled.div`
  display: flex;
  height: 30px;
  outline: ${(p) => (p.$active ? '1px solid #8fa9b8' : 'none')};
  outline-offset: -1px;

  button:first-child {
    background: ${(p) => (p.$active ? '#8d8d8d' : 'none')};
    border: ${(p) => (p.$active ? '1px solid #4b9bc8' : '0')};
  }
`

const QuickButton = styled.button`
  width: 26px;
  height: 30px;
`

const DropButton = styled.button`
  width: 13px;
  align-self: stretch;
`

const DocTitle = styled.h1`
  margin: 0 232px 0 auto;
  color: #d6d6d6;
  font-size: 14px;
  font-weight: 400;
`

const HelpSearch = styled.div`
  display: flex;
  align-items: center;
  width: 252px;
  height: 29px;
  padding-left: 5px;
  border: 1px solid #b5b5b5;
  background: #f8f8f8;
  color: #5c5c5c;

  input {
    flex: 1;
    height: 25px;
    margin-left: 7px;
    padding-left: 2px;
    background: #ebecf2;
    font-size: 14px;
  }
  input::placeholder { color: #5c5c5c; opacity: 1; }
  button { width: 29px; height: 27px; }
  button:last-child { width: 18px; }
`

const WindowButtons = styled.div`
  display: flex;
  align-items: center;
  height: 32px;
  padding-left: 4px;
  color: #111;

  button { height: 30px; width: 26px; }
  ${DropButton} { width: 13px; }
  svg { filter: drop-shadow(0 0 1px #bbb); }
`

const Ribbon = styled.div`
  display: flex;
  min-height: 87px;
  padding: 6px 0 2px;
  border-bottom: 1px solid ${line};
`

const Command = styled.div`
  display: flex;
  flex: none;
  width: ${(p) => p.$width}px;
  border-right: ${(p) => (p.$end ? '1px solid #c4c4c4' : '0')};
`

const CommandButton = styled.button`
  flex: 1;
  flex-direction: column;
  justify-content: flex-start;
  padding: ${(p) => (p.$drop ? 3 : 10)}px 0 8px;
  margin: 0 1px;
  border: 1px solid ${(p) => (p.$active ? '#3c9ad1' : 'transparent')};
  background: ${(p) => (p.$active ? '#8b8b8b' : 'none')};
  font-size: 14px;
  line-height: 19px;
  white-space: pre;
  color: ${(p) => (p.$active ? '#e2e2e2' : '#f0f0f0')};

  &:disabled { color: #8a8a8a; }
  span { margin-top: -2px; }
  svg:last-child:not(:first-child) { margin-top: auto; }
`

const Main = styled.main`
  position: relative;
  flex: 1;
  display: flex;
  flex-direction: column;
  border-right: 1px solid #3c3c3c;
`

const Backdrop = styled.svg`
  position: absolute;
  inset: 0;
  width: 100%;
  height: 100%;
`

const TopRow = styled.div`
  position: relative;
  display: flex;
  height: 28px;
`

const Tabs = styled.div`
  display: flex;
  background: #323232;
  border-bottom: 1px solid ${line};
`

const Tab = styled.button`
  width: ${(p) => p.$width}px;
  padding-bottom: 2px;
  border-right: 1px solid ${line};
  background: ${(p) => (p.$active ? '#494949' : '#323232')};
  font-size: 15px;
`

const ViewBar = styled.div`
  display: flex;
  align-items: center;
  padding-left: 70px;

  ${DropButton} { width: 14px; }
`

const ViewButton = styled.button`
  width: 26px;
  height: 26px;
`

const DocButtons = styled.div`
  display: flex;
  margin-left: auto;
  padding: 2px 5px 0 0;
  color: #999;

  button { width: 26px; height: 26px; }
`

const Body = styled.div`
  position: relative;
  flex: 1;
  display: flex;
  justify-content: space-between;
`

const Panel = styled.aside`
  position: relative;
  display: flex;
  flex-direction: column;
  width: 261px;
  padding: 2px 2px 0 0;
  border-right: 1px solid ${line};
  background: #494949;
`

const Grip = styled.div`
  display: flex;
  align-items: center;
  justify-content: center;
  height: 16px;
  margin-bottom: 4px;
  border: solid #c9c9c9;
  border-width: 1px 0;

  i { width: 5px; height: 5px; border-radius: 50%; background: #d5d5d5; }
`

const PanelTabs = styled.div`
  display: flex;
  height: 26px;
  border-bottom: 1px solid #b5b5b5;
`

const PanelTab = styled.button`
  width: 40px;
  border: solid ${line};
  border-width: 1px 1px 0 0;
  background: ${(p) => (p.$active ? '#494949' : '#323232')};
`

const MoreButton = styled.button`
  width: 16px;
  margin-left: auto;
`

const Filter = styled.label`
  display: flex;
  align-items: center;
  height: 32px;
  margin: 0 1px 0 3px;
  padding-left: 2px;
  border: 1px solid #c9c9c9;

  input { flex: 1; height: 28px; margin-left: 6px; }
`

const Tree = styled.ul`
  margin: 0;
  padding: 0;
  list-style: none;
  overflow: hidden;
  border-bottom: 2px solid #2b7ed0;
  font-family: ${wide};
  font-size: 15px;
  white-space: pre;
`

const TreeItem = styled.li`
  display: flex;
  align-items: center;
  gap: 4px;
  height: 24px;
  line-height: 24px;
`

const TreeRoot = styled(TreeItem)`
  padding-left: 2px;
  gap: 3px;
`

const Expander = styled.span`
  flex: none;
  width: 21px;
  padding-left: 8px;
`

const ScrollTrack = styled.div`
  height: 21px;
  margin: auto 0 1px;
  padding: 4px 44px 5px 24px;
  background: #33363d;

  i { display: block; height: 12px; border-radius: 4px; background: #212428; }
`

const PanelHandle = styled.button`
  position: absolute;
  left: 260px;
  top: 381px;
  width: 12px;
  height: 48px;
  border: 1px solid ${line};
  border-left: 0;
  background: #494949;

  i { width: 5px; height: 5px; border-radius: 50%; background: #d5d5d5; }
`

const TaskPane = styled.aside`
  position: relative;
  align-self: flex-start;
  width: 32px;
  margin-top: 22px;
  border: solid ${line};
  border-width: 1px 0 0 1px;
`

const PaneButton = styled.button`
  width: 100%;
  height: 30px;
  border-bottom: 1px solid ${line};
  background: ${(p) => (p.$active ? '#b4b4b4' : '#323232')};
`

const Meter = styled.div`
  position: absolute;
  right: -1px;
  bottom: -31px;
  width: 10px;
  height: 53px;
  border: 3px solid #25272b;
  border-radius: 3px;
  background: linear-gradient(#6b4010 45%, #d8902c 47%, #3c6b2c 50%, #3c6b2c 90%, #7bea35 94%);
`

const ModelTabs = styled.div`
  display: flex;
  height: 21px;
  border: solid ${line};
  border-width: 1px 0;
`

const Steps = styled.div`
  display: flex;
  width: 82px;
  padding-left: 2px;
  background: #b4b4c8;

  button { flex: 1; border: 1px solid #85859c; border-width: 0 1px 1px 0; background: #a5a5bb; }
`

const ModelTab = styled.button`
  padding: ${(p) => (p.$last ? '0 18px 2px 7px' : p.$active ? '0 12px 2px 15px' : '0 10px 2px 8px')};
  border-right: 1px solid ${line};
  background: ${(p) => (p.$active ? '#494949' : '#323232')};
  font-size: 17px;
  line-height: 17px;
`

const StatusBar = styled.footer`
  display: flex;
  align-items: center;
  height: 21px;
  padding-left: 2px;
  font-size: 15px;
  line-height: 20px;
`

const Product = styled.span`
  margin-right: auto;
  font-family: "Open Sans", ${ui};
`

const StatusCell = styled.span`
  padding: 0 6px;
  margin-right: ${(p) => (p.$wide ? 15 : 6)}px;
  border-right: 1px solid #33363d;
  ${(p) => p.$wide && 'border-left: 1px solid #33363d; padding: 0 5px;'}
`

const StatusMenu = styled.button`
  gap: 22px;
  padding-left: 37px;
  border-left: 1px solid #33363d;
  line-height: 20px;
`

const TagButton = styled.button`
  margin: 0 4px 0 66px;
`

const TaskBar = styled.footer`
  display: flex;
  height: 50px;
  background: #31333b;
`

const StartButton = styled.button`
  width: 60px;
`

const Cortana = styled.div`
  display: flex;
  align-items: center;
  width: 430px;
  padding-left: 11px;
  background: #303237;

  i { flex: none; width: 28px; height: 28px; border: 4px solid #fff; border-radius: 50%; }
  input { flex: 1; height: 40px; margin-left: 11px; padding-bottom: 2px; font-size: 19px; }
  input::placeholder { color: #a5a6a8; opacity: 1; }
  button { width: 52px; height: 50px; }
`

const TaskIcon = styled.button`
  width: ${(p) => (p.$wide ? 80 : 60)}px;
`

const TaskApp = styled.button`
  justify-content: flex-start;
  gap: 6px;
  width: 201px;
  padding-left: 11px;
  background: ${(p) => (p.$dark ? '#212528' : '#383b42')};
  font-family: "Open Sans", ${ui};
  font-size: 15px;
`

const Tray = styled.div`
  display: flex;
  margin-left: auto;

  button { width: 30px; font-size: 17px; }
`

const Clock = styled.div`
  display: flex;
  flex-direction: column;
  align-items: center;
  width: 93px;
  padding-top: 2px;
  font: 15px/23px "Open Sans", ${ui};
`

const NoticeButton = styled.button`
  width: 48px;
  margin-right: 17px;
`

const Stamp = styled.div`
  position: absolute;
  right: 20px;
  bottom: 18px;
  display: flex;
  align-items: flex-end;
  gap: 2px;
  opacity: .6;
  pointer-events: none;
`

const StampText = styled.div`
  display: flex;
  flex-direction: column;
  padding-bottom: 8px;
  color: #b9b9b9;
  text-shadow: 0 0 2px #000;

  b { font-size: 28px; line-height: 35px; font-style: italic; }
  i { font: italic 18px/20px "Open Sans", sans-serif; }
`
